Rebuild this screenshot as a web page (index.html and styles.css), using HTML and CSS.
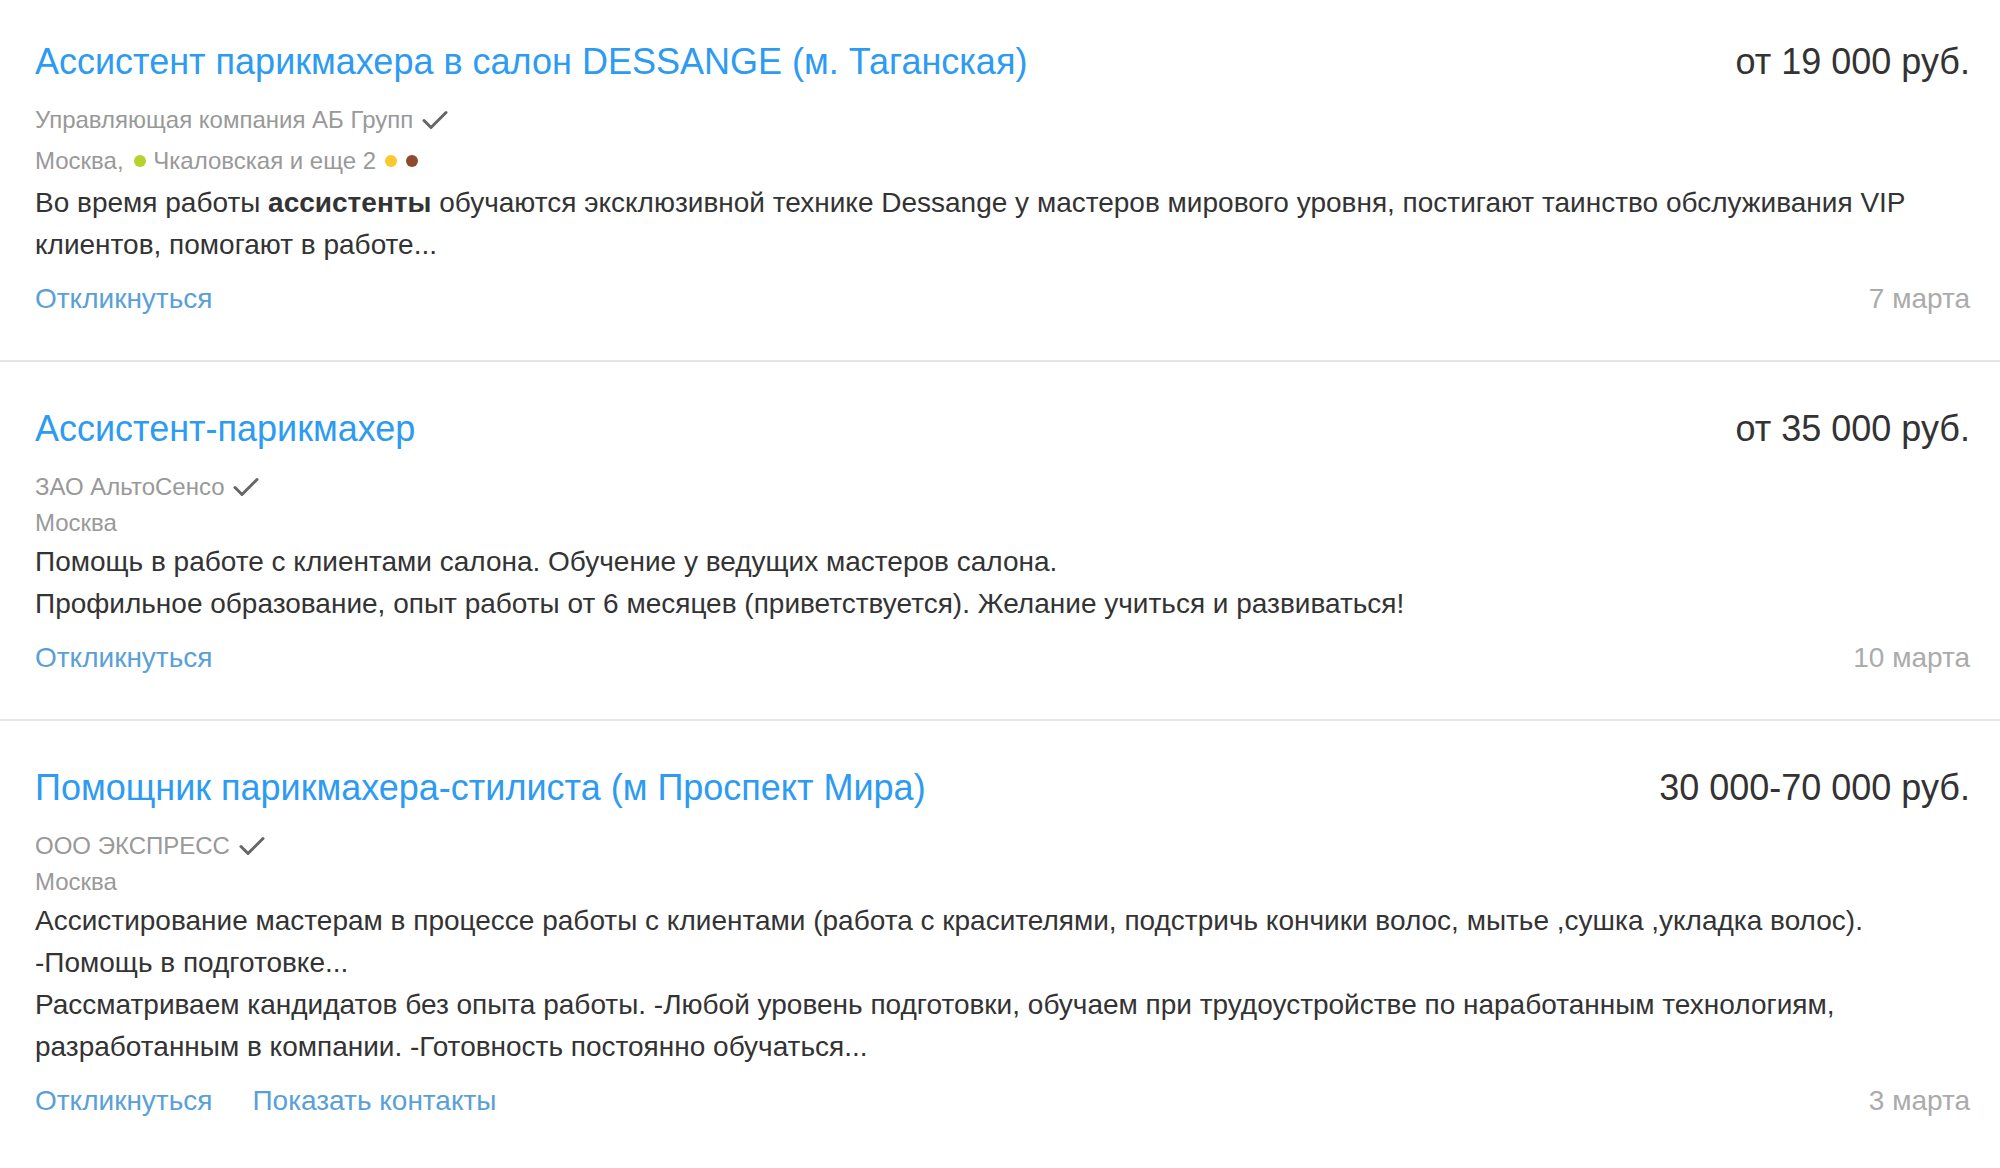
FILE: index.html
```html
<!DOCTYPE html>
<html lang="ru">
<head>
<meta charset="utf-8">
<title>Вакансии</title>
<link rel="stylesheet" href="styles.css">
</head>
<body>
<div class="list">
  <div class="vacancy">
    <div class="head">
      <a class="title" href="#">Ассистент парикмахера в салон DESSANGE (м. Таганская)</a>
      <div class="price">от 19 000 руб.</div>
    </div>
    <div class="company">Управляющая компания АБ Групп <svg class="check" width="26" height="20" viewBox="0 0 26 20"><path d="M2 10.5 L9 17.5 L24 2.5" fill="none" stroke="#666" stroke-width="3" stroke-linecap="round" stroke-linejoin="round"/></svg></div>
    <div class="location metro">Москва, <span class="dot dot-first green"></span>Чкаловская и еще 2<span class="dot dot-after yellow"></span><span class="dot brown"></span></div>
    <div class="desc">Во время работы <b>ассистенты</b> обучаются эксклюзивной технике Dessange у мастеров мирового уровня, постигают таинство обслуживания VIP клиентов, помогают в работе...</div>
    <div class="foot">
      <div class="actions"><a class="action" href="#">Откликнуться</a></div>
      <div class="date">7 марта</div>
    </div>
  </div>
  <div class="vacancy">
    <div class="head">
      <a class="title" href="#">Ассистент-парикмахер</a>
      <div class="price">от 35 000 руб.</div>
    </div>
    <div class="company">ЗАО АльтоСенсо <svg class="check" width="26" height="20" viewBox="0 0 26 20"><path d="M2 10.5 L9 17.5 L24 2.5" fill="none" stroke="#666" stroke-width="3" stroke-linecap="round" stroke-linejoin="round"/></svg></div>
    <div class="location">Москва</div>
    <div class="desc">Помощь в работе с клиентами салона. Обучение у ведущих мастеров салона.</div>
    <div class="desc">Профильное образование, опыт работы от 6 месяцев (приветствуется). Желание учиться и развиваться!</div>
    <div class="foot">
      <div class="actions"><a class="action" href="#">Откликнуться</a></div>
      <div class="date">10 марта</div>
    </div>
  </div>
  <div class="vacancy">
    <div class="head">
      <a class="title" href="#">Помощник парикмахера-стилиста (м Проспект Мира)</a>
      <div class="price">30 000-70 000 руб.</div>
    </div>
    <div class="company">ООО ЭКСПРЕСС <svg class="check" width="26" height="20" viewBox="0 0 26 20"><path d="M2 10.5 L9 17.5 L24 2.5" fill="none" stroke="#666" stroke-width="3" stroke-linecap="round" stroke-linejoin="round"/></svg></div>
    <div class="location">Москва</div>
    <div class="desc">Ассистирование мастерам в процессе работы с клиентами (работа с красителями, подстричь кончики волос, мытье ,сушка ,укладка волос). -Помощь в подготовке...</div>
    <div class="desc">Рассматриваем кандидатов без опыта работы. -Любой уровень подготовки, обучаем при трудоустройстве по наработанным технологиям, разработанным в компании. -Готовность постоянно обучаться...</div>
    <div class="foot">
      <div class="actions"><a class="action" href="#">Откликнуться</a><a class="action" href="#">Показать контакты</a></div>
      <div class="date">3 марта</div>
    </div>
  </div>
</div>
</body>
</html>
```
FILE: styles.css
```css
html, body {
  margin: 0;
  padding: 0;
  background: #fff;
}
body {
  font-family: "Liberation Sans", Arial, sans-serif;
  color: #333;
}
a {
  text-decoration: none;
}
.vacancy {
  padding: 45px 30px 41px 35px;
  border-bottom: 2px solid #e6e6e6;
}
.vacancy:first-child {
  padding-top: 40px;
}
.vacancy:last-child {
  border-bottom: none;
}
.head {
  display: flex;
  justify-content: space-between;
  align-items: baseline;
  gap: 40px;
}
.title {
  font-size: 36px;
  line-height: 44px;
  color: #2d9bf2;
}
.price {
  font-size: 36px;
  line-height: 44px;
  color: #333;
  white-space: nowrap;
}
.company {
  margin-top: 18px;
  font-size: 24px;
  line-height: 36px;
  color: #999;
}
.check {
  vertical-align: -2px;
  margin-left: 2px;
}
.location {
  font-size: 24px;
  line-height: 36px;
  color: #999;
}
.location.metro {
  margin-top: 2px;
  line-height: 42px;
}
.dot {
  display: inline-block;
  width: 12px;
  height: 12px;
  border-radius: 50%;
  vertical-align: middle;
  margin-left: 4px;
  position: relative;
  top: -2px;
}
.dot-first {
  margin-right: 7px;
}
.dot-after {
  margin-left: 10px;
}
.dot + .dot {
  margin-left: 9px;
}
.green { background: #b9d12b; }
.yellow { background: #fdc82e; }
.brown { background: #8e4a2c; }
.desc {
  font-size: 28px;
  line-height: 42px;
  color: #333;
}
.foot {
  margin-top: 13px;
  display: flex;
  justify-content: space-between;
  align-items: baseline;
}
.actions {
  display: flex;
  gap: 40px;
}
.action {
  font-size: 28px;
  line-height: 40px;
  color: #5aa0d8;
}
.date {
  font-size: 28px;
  line-height: 40px;
  color: #ababab;
}
```
